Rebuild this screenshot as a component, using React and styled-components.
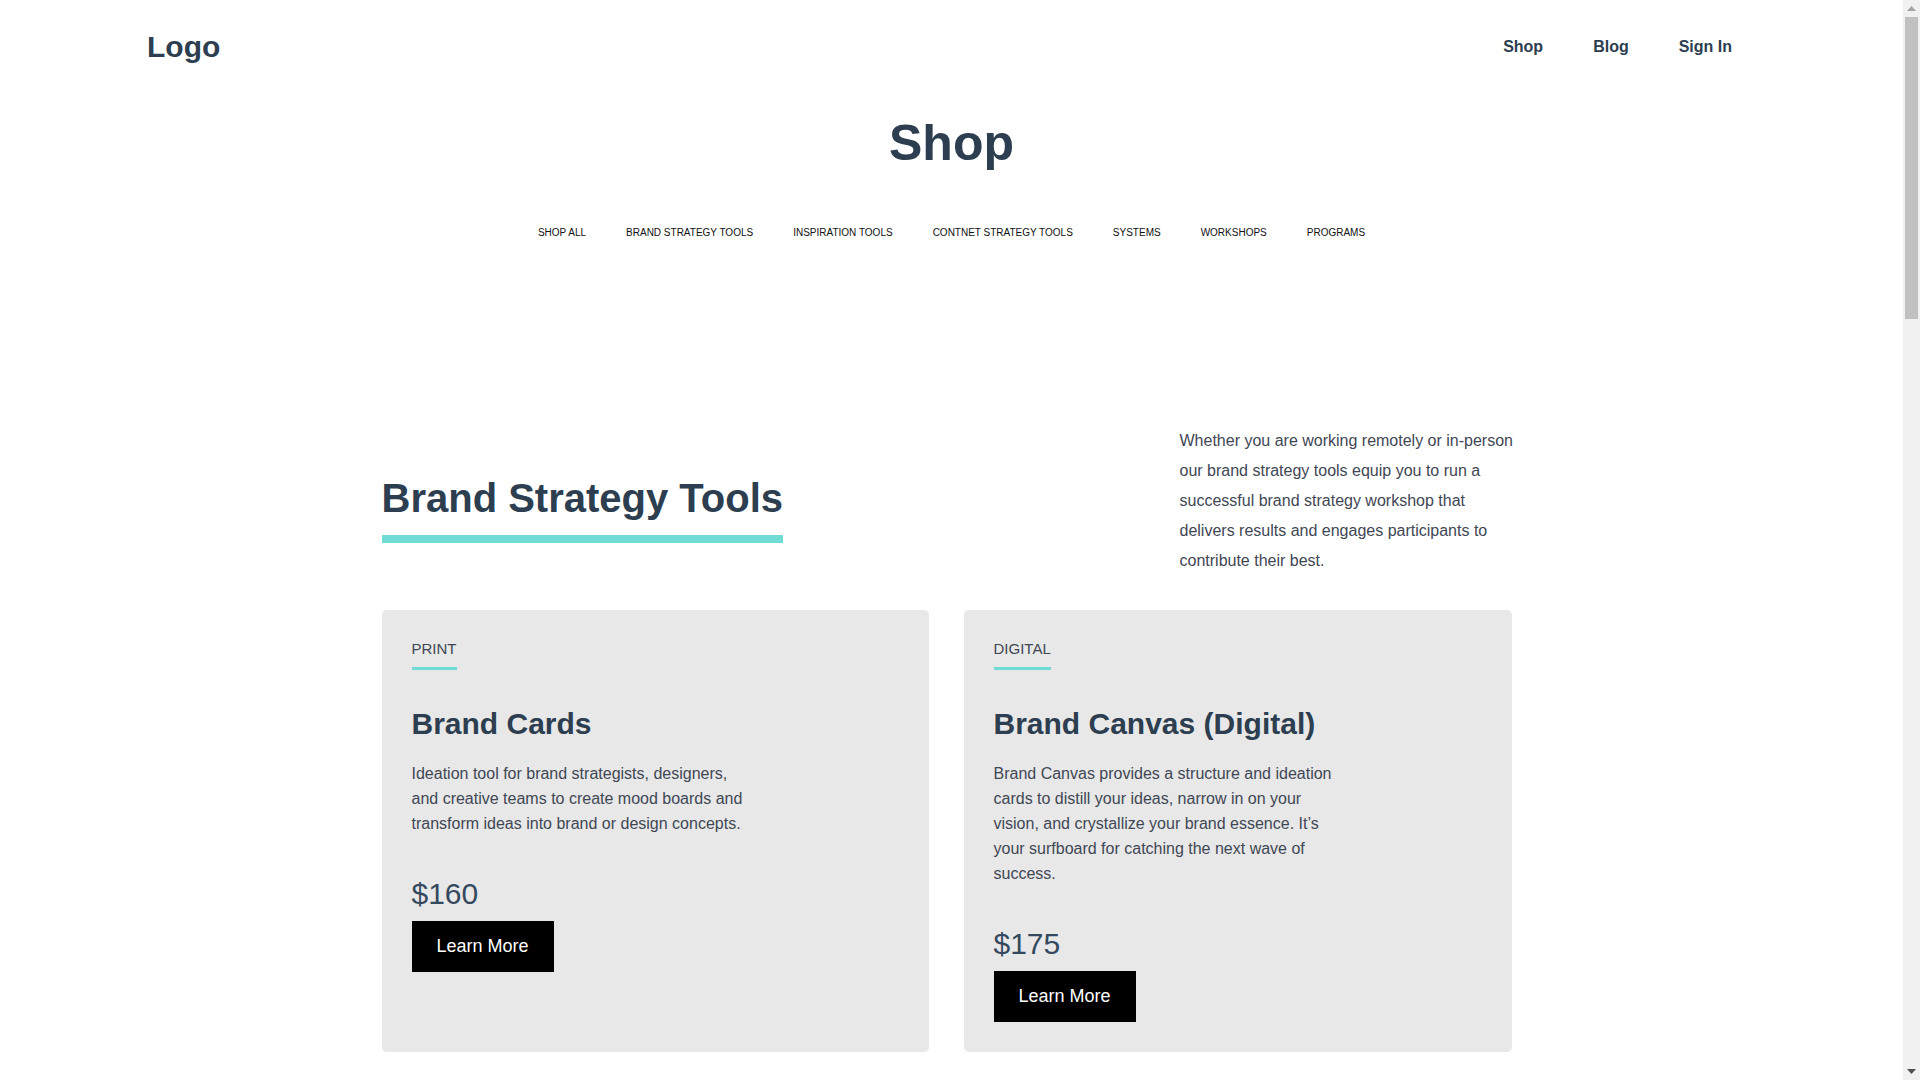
import React from "react";
import styled, { createGlobalStyle } from "styled-components";

const GlobalStyle = createGlobalStyle`
  * {
    box-sizing: border-box;
  }
  body {
    margin: 0 17px 0 0;
    background: #fff;
    font-family: "Liberation Sans", Arial, sans-serif;
    color: #2c3e50;
  }
`;

const categories = [
  "SHOP ALL",
  "BRAND STRATEGY TOOLS",
  "INSPIRATION TOOLS",
  "CONTNET STRATEGY TOOLS",
  "SYSTEMS",
  "WORKSHOPS",
  "PROGRAMS",
];

const products = [
  {
    type: "PRINT",
    title: "Brand Cards",
    text: "Ideation tool for brand strategists, designers, and creative teams to create mood boards and transform ideas into brand or design concepts.",
    price: "$160",
  },
  {
    type: "DIGITAL",
    title: "Brand Canvas (Digital)",
    text: "Brand Canvas provides a structure and ideation cards to distill your ideas, narrow in on your vision, and crystallize your brand essence. It’s your surfboard for catching the next wave of success.",
    price: "$175",
  },
];

const App = () => {
  return (
    <Page>
      <GlobalStyle />
      <Header>
        <Logo>Logo</Logo>
        <NavLinks>
          <NavLink href="#">Shop</NavLink>
          <NavLink href="#">Blog</NavLink>
          <NavLink href="#">Sign In</NavLink>
        </NavLinks>
      </Header>

      <PageTitle>Shop</PageTitle>

      <CategoryNav>
        {categories.map((c) => (
          <Category key={c} href="#">
            {c}
          </Category>
        ))}
      </CategoryNav>

      <Section>
        <IntroRow>
          <TitleWrap>
            <SectionTitle>Brand Strategy Tools</SectionTitle>
          </TitleWrap>
          <Intro>
            Whether you are working remotely or in-person our brand strategy
            tools equip you to run a successful brand strategy workshop that
            delivers results and engages participants to contribute their best.
          </Intro>
        </IntroRow>

        <CardGrid>
          {products.map((p) => (
            <Card key={p.title}>
              <Label>{p.type}</Label>
              <CardTitle>{p.title}</CardTitle>
              <CardText>{p.text}</CardText>
              <Price>{p.price}</Price>
              <Button>Learn More</Button>
            </Card>
          ))}
        </CardGrid>
      </Section>

      {/* page scrollbar as seen in the screenshot */}
      <ScrollTrack>
        <Arrow width="9" height="5" viewBox="0 0 9 5">
          <path d="M4.5 0 L9 5 L0 5 Z" fill="#a3a3a3" />
        </Arrow>
        <Thumb />
        <Arrow width="9" height="5" viewBox="0 0 9 5" $down>
          <path d="M0 0 L9 0 L4.5 5 Z" fill="#505050" />
        </Arrow>
      </ScrollTrack>
    </Page>
  );
};

export default App;

const Page = styled.div`
  min-height: 3740px;
`;

const ScrollTrack = styled.div`
  position: fixed;
  top: 0;
  right: 0;
  width: 17px;
  height: 100vh;
  background: #f1f1f1;
  display: flex;
  flex-direction: column;
  align-items: center;
  padding: 6px 0;
`;

const Arrow = styled.svg`
  flex: none;
  margin-top: ${(p) => (p.$down ? "auto" : "0")};
`;

const Thumb = styled.div`
  width: 13px;
  height: 302px;
  margin-top: 6px;
  background: #c1c1c1;
`;

const Header = styled.header`
  height: 94px;
  display: flex;
  justify-content: space-between;
  align-items: center;
  padding: 0 171px 0 147px;
`;

const Logo = styled.div`
  font-size: 30px;
  font-weight: 700;
  color: #2c3e50;
`;

const NavLinks = styled.nav`
  display: flex;
  gap: 50px;
`;

const NavLink = styled.a`
  font-size: 16px;
  font-weight: 700;
  color: #2c3e50;
  text-decoration: none;
`;

const PageTitle = styled.h1`
  margin: 21px 0 0;
  font-size: 50px;
  line-height: 57px;
  font-weight: 700;
  text-align: center;
  color: #2c3e50;
`;

const CategoryNav = styled.nav`
  display: flex;
  justify-content: center;
  gap: 40px;
  margin-top: 55px;
  line-height: 12px;
`;

const Category = styled.a`
  font-size: 10px;
  color: #111;
  text-decoration: none;
`;

const Section = styled.section`
  width: 1140px;
  margin: 185px auto 0;
`;

const IntroRow = styled.div`
  display: flex;
  justify-content: space-between;
  align-items: flex-start;
  padding-right: 5px;
`;

const TitleWrap = styled.div`
  margin-top: 51px;
`;

const SectionTitle = styled.h2`
  display: inline-block;
  margin: 0;
  font-size: 40px;
  line-height: 46px;
  font-weight: 700;
  color: #2c3e50;
  padding-bottom: 14px;
  border-bottom: 8px solid #70dcd5;
`;

const Intro = styled.p`
  width: 337px;
  margin: 2px 0 0;
  font-size: 16px;
  line-height: 30px;
  color: #3f4754;
`;

const CardGrid = styled.div`
  display: grid;
  grid-template-columns: 547px 548px;
  gap: 35px;
  margin-top: 34px;
`;

const Card = styled.div`
  display: flex;
  flex-direction: column;
  align-items: flex-start;
  background: #e8e8e8;
  border-radius: 5px;
  padding: 30px;
`;

const Label = styled.span`
  display: inline-block;
  font-size: 15px;
  line-height: 17px;
  color: #3f4754;
  padding-bottom: 10px;
  border-bottom: 3px solid #70dcd5;
`;

const CardTitle = styled.h3`
  margin: 36px 0 0;
  font-size: 30px;
  line-height: 36px;
  font-weight: 700;
  color: #2c3e50;
`;

const CardText = styled.p`
  margin: 19px 0 0;
  max-width: 342px;
  font-size: 16px;
  line-height: 25px;
  color: #3f4754;
`;

const Price = styled.div`
  margin-top: 41px;
  font-size: 30px;
  line-height: 34px;
  color: #34495e;
`;

const Button = styled.button`
  margin-top: 10px;
  height: 51px;
  padding: 0 25px;
  border: none;
  background: #000;
  color: #fff;
  font-family: inherit;
  font-size: 18px;
  cursor: pointer;
`;
